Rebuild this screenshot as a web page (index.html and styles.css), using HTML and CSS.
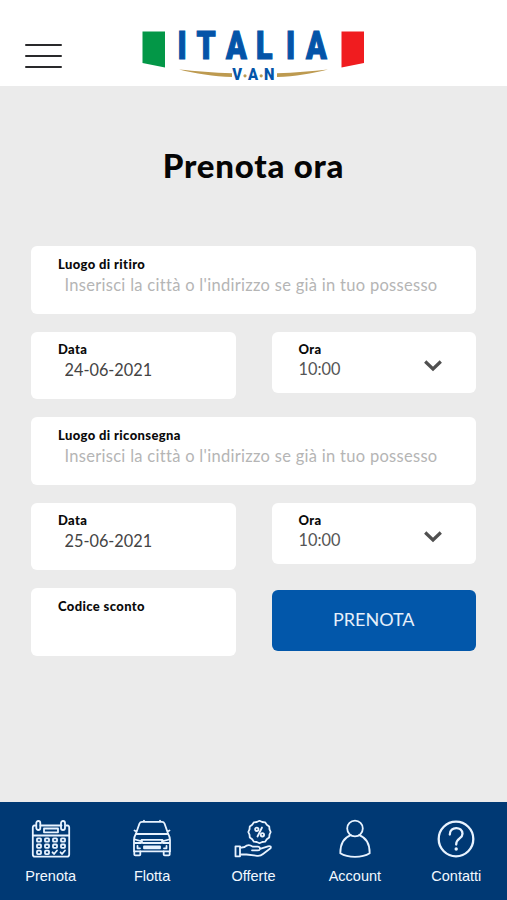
FILE: index.html
```html
<!DOCTYPE html>
<html lang="it">
<head>
    <meta charset="UTF-8">
    <meta name="viewport" content="width=device-width, initial-scale=1.0">
    <title>Italia Van - Prenota ora</title>
    <link rel="stylesheet" href="styles.css">
</head>
<body>
    <header class="header">
        <button class="menu-btn" type="button" aria-label="Menu">
            <span></span>
            <span></span>
            <span></span>
        </button>
        <svg class="logo" viewBox="0 -10 224 68" role="img" aria-label="Italia Van">
            <path d="M0.5 3.5H23V39.5L0.5 35Z" fill="#039747"/>
            <path d="M199.5 3.5H222V35L199.5 39.5Z" fill="#f01c1f"/>
            <text class="logo-name" transform="scale(.8 1)" y="30.8" x="44.5 68.2 105 142.5 180 205">ITALIA</text>
            <path d="M37 41.5C53 43 72 45 90 45.3V49C72 48.5 53 45.5 37 41.5Z" fill="#bd9a50"/>
            <path d="M186 41.5C170 43 153 45 135 45.3V49C153 48.5 170 45.5 186 41.5Z" fill="#bd9a50"/>
            <text class="logo-van" transform="scale(.9 1)" y="52" x="100.4 117.8 135.6">VAN</text>
            <circle cx="103" cy="47.8" r="1.6" fill="#bd9a50"/>
            <circle cx="119.2" cy="47.8" r="1.6" fill="#bd9a50"/>
        </svg>
    </header>

    <main class="content">
        <h1>Prenota ora</h1>

        <form class="booking-form">
            <div class="field full">
                <label for="pickup">Luogo di ritiro</label>
                <input type="text" id="pickup" placeholder="Inserisci la città o l'indirizzo se già in tuo possesso">
            </div>

            <div class="field">
                <label for="pickup-date">Data</label>
                <input type="text" id="pickup-date" value="24-06-2021">
            </div>
            <div class="field time">
                <label for="pickup-time">Ora</label>
                <div class="select-row">
                    <select id="pickup-time">
                        <option>10:00</option>
                    </select>
                    <svg class="chevron" viewBox="0 0 18 12"><path d="M1.2 1.5L9 9L16.8 1.5"/></svg>
                </div>
            </div>

            <div class="field full">
                <label for="return">Luogo di riconsegna</label>
                <input type="text" id="return" placeholder="Inserisci la città o l'indirizzo se già in tuo possesso">
            </div>

            <div class="field">
                <label for="return-date">Data</label>
                <input type="text" id="return-date" value="25-06-2021">
            </div>
            <div class="field time">
                <label for="return-time">Ora</label>
                <div class="select-row">
                    <select id="return-time">
                        <option>10:00</option>
                    </select>
                    <svg class="chevron" viewBox="0 0 18 12"><path d="M1.2 1.5L9 9L16.8 1.5"/></svg>
                </div>
            </div>

            <div class="field">
                <label for="promo">Codice sconto</label>
                <input type="text" id="promo">
            </div>
            <button class="submit-btn" type="submit">PRENOTA</button>
        </form>
    </main>

    <nav class="bottom-nav">
        <a class="nav-item" href="#">
            <svg viewBox="0 0 40 40">
                <path d="M4.5 6.5H3.5Q1.8 6.5 1.8 8.5V35.5Q1.8 37.7 4 37.7H36Q38.2 37.7 38.2 35.5V8.5Q38.2 6.5 36.5 6.5H35.5M9.5 6.5H30.5M2 16.5H38"/>
                <rect x="5.3" y="2" width="4" height="9" rx="2"/>
                <rect x="30" y="2" width="4" height="9" rx="2"/>
                <rect x="13" y="9.5" width="14" height="3.8"/>
                <rect x="6" y="19.3" width="4" height="3.4" rx=".8"/>
                <rect x="14" y="19.3" width="4" height="3.4" rx=".8"/>
                <rect x="22" y="19.3" width="4" height="3.4" rx=".8"/>
                <rect x="30" y="19.3" width="4" height="3.4" rx=".8"/>
                <rect x="6" y="25.5" width="4" height="3.4" rx=".8"/>
                <rect x="14" y="25.5" width="4" height="3.4" rx=".8"/>
                <rect x="22" y="25.5" width="4" height="3.4" rx=".8"/>
                <rect x="30" y="25.5" width="4" height="3.4" rx=".8"/>
                <rect x="6" y="31.7" width="4" height="3.4" rx=".8"/>
                <rect x="14" y="31.7" width="4" height="3.4" rx=".8"/>
                <path d="M21.5 33.3L23 35L26 31.5M29.5 33.3L31 35L34 31.5"/>
            </svg>
            <span>Prenota</span>
        </a>
        <a class="nav-item" href="#">
            <svg viewBox="0 0 40 40">
                <path d="M3.8 15L7.5 4.5Q8.2 2.8 10 2.8H30Q31.8 2.8 32.5 4.5L36.2 15M3.8 15H36.2M4.3 12.5L2.5 11.5M35.7 12.5L37.5 11.5M11.5 2.5L12 1.8M28.5 2.5L28 1.8"/>
                <path d="M3.8 15Q2 18 2 21V32.3H38V21Q38 18 36.2 15"/>
                <path d="M2.3 32.3V35.5Q2.3 36.3 3.3 36.3H7.5Q8.3 36.3 8.3 35.5V32.3M31.7 32.3V35.5Q31.7 36.3 32.7 36.3H36.7Q37.7 36.3 37.7 35.5V32.3"/>
                <path d="M3 20.5L10 22.3Q10 24 8.5 24H3M37 20.5L30 22.3Q30 24 31.5 24H37M9.5 20.8H30.5M11 24H29M5.5 27V29.3H8M34.5 27V29.3H32M12 27.5H28V29.3H12Z"/>
            </svg>
            <span>Flotta</span>
        </a>
        <a class="nav-item" href="#">
            <svg viewBox="0 0 40 40">
                <path d="M26.5 1.8L29.2 3L32.1 3.3L33.8 5.7L36.2 7.4L36.5 10.3L37.7 13L36.5 15.7L36.2 18.6L33.8 20.3L32.1 22.7L29.2 23L26.5 24.2L23.8 23L20.9 22.7L19.2 20.3L16.8 18.6L16.5 15.7L15.3 13L16.5 10.3L16.8 7.4L19.2 5.7L20.9 3.3L23.8 3Z"/>
                <path d="M29 8.5L24.5 17.5"/>
                <circle cx="23.8" cy="10.3" r="1.7"/>
                <circle cx="29.4" cy="15.8" r="1.7"/>
                <path d="M2.5 27.3H7V37.3H2.5ZM7 28.8L11.5 28Q14.5 25.5 17.5 26.5L20 27.7H25Q27.5 28 26.8 30.3Q26.3 31.3 24.5 31.3H19M27 29.8L35 27.3Q38.8 26.8 37.5 29.3L30 35Q27.5 37.2 24 36.8L13.5 35.5H7"/>
            </svg>
            <span>Offerte</span>
        </a>
        <a class="nav-item" href="#">
            <svg viewBox="0 0 40 40">
                <circle cx="20" cy="9.5" r="7.8"/>
                <path d="M15.8 16.2C9.5 18.5 5.3 25 5.3 34.2C13 39 27 39 34.7 34.2C34.7 25 30.5 18.5 24.2 16.2"/>
            </svg>
            <span>Account</span>
        </a>
        <a class="nav-item" href="#">
            <svg viewBox="0 0 40 40">
                <circle class="ring" cx="20" cy="20" r="17.3"/>
                <path class="ring" d="M13.8 15.5C13.8 7 26.5 7 26.5 14.8C26.5 20 20.2 19 20.2 25.5"/>
                <circle cx="20.2" cy="30" r="1.7" class="dot"/>
            </svg>
            <span>Contatti</span>
        </a>
    </nav>
</body>
</html>
```
FILE: styles.css
```css
* {
    box-sizing: border-box;
}
body {
    margin: 0;
    height: 900px;
    display: flex;
    flex-direction: column;
    background-color: #ebebeb;
    font-family: Lato, "Open Sans", sans-serif;
    font-variant-ligatures: none;
}
.header {
    height: 86px;
    background-color: white;
    display: flex;
    align-items: flex-start;
    padding: 18px 25px 0;
}
.menu-btn {
    width: 37px;
    height: 26px;
    margin-top: 25px;
    padding: 0;
    border: none;
    background: none;
    display: flex;
    flex-direction: column;
    justify-content: space-between;
}
.menu-btn span {
    height: 2px;
    width: 100%;
    border-radius: 1px;
    background-color: #29292b;
    margin: 1px 0;
}
.logo {
    width: 224px;
    height: 68px;
    margin-left: 80px;
}
.logo-name {
    font-family: Roboto, sans-serif;
    font-size: 38px;
    font-weight: 900;
    fill: #0454a8;
    stroke: #0454a8;
    stroke-width: 1.2;
}
.logo-van {
    font-family: Roboto, sans-serif;
    font-size: 16.5px;
    font-weight: 900;
    fill: #0454a8;
}
.content {
    flex: 1;
    padding: 0 31px;
}
h1 {
    margin: 58px 0 59.3px;
    height: 43px;
    line-height: 43px;
    text-align: center;
    font-size: 33px;
    font-weight: 900;
    letter-spacing: 0.75px;
    color: #050505;
}
.booking-form {
    display: grid;
    grid-template-columns: 1fr 1fr;
    column-gap: 36px;
    row-gap: 18px;
}
.field {
    height: 67.5px;
    background-color: white;
    border-radius: 6px;
    padding: 9.5px 27px 0;
}
.full {
    grid-column: 1 / 3;
}
.time {
    height: 61px;
}
label {
    display: block;
    height: 17px;
    line-height: 17px;
    font-size: 13px;
    font-weight: 900;
    letter-spacing: 0.38px;
    color: #0a0a0a;
}
input {
    display: block;
    width: 100%;
    height: 23px;
    padding: 0 6.5px;
    border: none;
    outline: none;
    background: none;
    font-family: inherit;
    font-size: 16.3px;
    color: #444;
}
input::placeholder {
    font-size: 16.5px;
    letter-spacing: 0.29px;
    color: #b5b5b5;
    opacity: 1;
}
.select-row {
    display: flex;
    justify-content: space-between;
    align-items: flex-start;
    padding-right: 7px;
}
select {
    appearance: none;
    height: 20px;
    padding: 0;
    border: none;
    outline: none;
    background: none;
    font-family: inherit;
    font-size: 16.3px;
    color: #555;
}
.chevron {
    width: 18px;
    height: 12px;
    margin-top: 1.5px;
    fill: none;
    stroke: #505050;
    stroke-width: 3.2;
}
.submit-btn {
    height: 61px;
    margin-top: 1.5px;
    padding-bottom: 3px;
    border: none;
    border-radius: 6px;
    background-color: #0257aa;
    color: #e6f0fa;
    font-family: inherit;
    font-size: 18px;
    cursor: pointer;
}
.bottom-nav {
    height: 98px;
    background-color: #003974;
    display: grid;
    grid-template-columns: repeat(5, 1fr);
    padding-top: 17px;
}
.nav-item {
    display: flex;
    flex-direction: column;
    align-items: center;
    gap: 8px;
    color: #f2f8ff;
    text-decoration: none;
    font-family: "Liberation Sans", Arial, sans-serif;
    font-size: 14.5px;
    line-height: 18px;
}
.nav-item svg {
    width: 40px;
    height: 40px;
    fill: none;
    stroke: #e8f3ff;
    stroke-width: 1.8;
    stroke-linecap: round;
    stroke-linejoin: round;
}
.nav-item .ring {
    stroke-width: 2.3;
}
.nav-item .dot {
    fill: #e8f3ff;
    stroke: none;
}
```
